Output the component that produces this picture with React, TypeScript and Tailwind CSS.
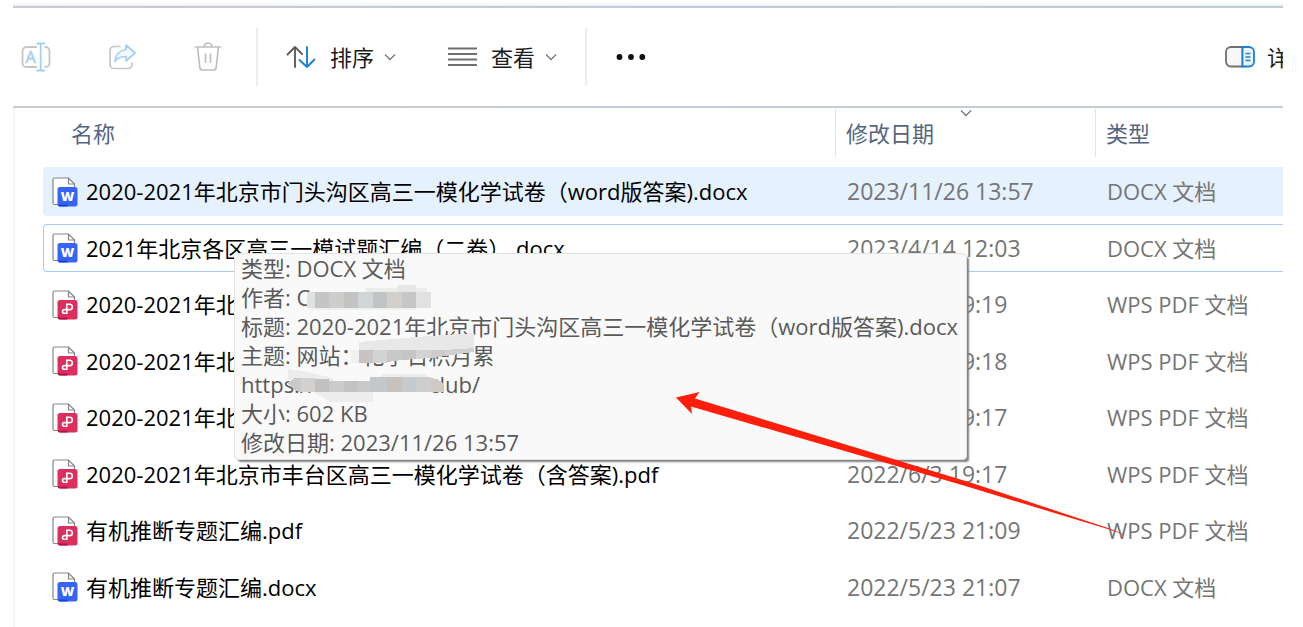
import type { ReactNode } from "react";
import clsx from "clsx";

type FileKind = "docx" | "pdf";

interface FileItem {
    name: string;
    date: string;
    kind: FileKind;
    state?: "selected" | "focused";
}

const files: FileItem[] = [
    { name: "2020-2021年北京市门头沟区高三一模化学试卷（word版答案).docx", date: "2023/11/26 13:57", kind: "docx", state: "selected" },
    { name: "2021年北京各区高三一模试题汇编（二卷）.docx", date: "2023/4/14 12:03", kind: "docx", state: "focused" },
    { name: "2020-2021年北", date: "2022/6/3 19:19", kind: "pdf" },
    { name: "2020-2021年北", date: "2022/6/3 19:18", kind: "pdf" },
    { name: "2020-2021年北", date: "2022/6/3 19:17", kind: "pdf" },
    { name: "2020-2021年北京市丰台区高三一模化学试卷（含答案).pdf", date: "2022/6/3 19:17", kind: "pdf" },
    { name: "有机推断专题汇编.pdf", date: "2022/5/23 21:09", kind: "pdf" },
    { name: "有机推断专题汇编.docx", date: "2022/5/23 21:07", kind: "docx" },
];

const typeLabels: Record<FileKind, string> = {
    docx: "DOCX 文档",
    pdf: "WPS PDF 文档",
};

function RenameIcon() {
    return (
        <svg width="30" height="30" viewBox="0 0 30 30" fill="none" strokeWidth="1.8">
            <path d="M16 5H5.5a4 4 0 0 0-4 4v12a4 4 0 0 0 4 4H16M23.5 5h1a4 4 0 0 1 4 4v12a4 4 0 0 1-4 4h-1" stroke="#c6c6c6" />
            <path d="M19.7 1.5v27M15.5 1.5h8.5M15.5 28.500h8.5" stroke="#a6cff0" />
            <text x="4.6" y="20.500" fontSize="16" fontFamily="Open Sans" fill="#a6cff0" stroke="#a6cff0" strokeWidth="0.6">A</text>
        </svg>
    );
}

function ShareIcon() {
    return (
        <svg width="28" height="28" viewBox="0 0 28 28" fill="none" strokeWidth="1.7" strokeLinejoin="round" strokeLinecap="round">
            <path d="M12 3.5H6a4 4 0 0 0-4 4v14a4 4 0 0 0 4 4h14a4 4 0 0 0 4-4v-1.5" stroke="#c6c6c6" />
            <path d="M18 2l9 8-9 8v-4.500c-5 0-8.500 1.500-11 5C7.500 12 11.500 7.500 18 6.500z" fill="#f3f9fe" stroke="#a6cff0" />
        </svg>
    );
}

function TrashIcon() {
    return (
        <svg width="28" height="30" viewBox="0 0 28 30" fill="none" stroke="#c0c0c0" strokeWidth="1.7" strokeLinecap="round">
            <path d="M1.500 5h25M10 5a4 4 0 0 1 8 0M3.500 5l2.300 20.500a3 3 0 0 0 3 2.500h10.400a3 3 0 0 0 3-2.500L24.500 5M11.500 12v8.500M16.500 12v8.500" />
        </svg>
    );
}

function SortIcon() {
    return (
        <svg width="30" height="24" viewBox="0 0 30 24" fill="none" strokeWidth="1.900" strokeLinecap="round" strokeLinejoin="round">
            <path d="M9 22V2M1.500 9.500L9 2l7 7" stroke="#5c5c5c" />
            <path d="M21 2v20M13.500 15L21 22l7.500-7.500" stroke="#1b7fd4" />
        </svg>
    );
}

function ListIcon() {
    return (
        <svg width="29" height="22" viewBox="0 0 29 22" stroke="#6f6f6f" strokeWidth="1.800">
            <path d="M0 2.500h29M0 8h29M0 13.500h29M0 19h29" />
        </svg>
    );
}

function MoreIcon() {
    return (
        <svg width="30" height="8" viewBox="0 0 30 8" fill="#111">
            <circle cx="3.500" cy="4" r="2.900" />
            <circle cx="15" cy="4" r="2.900" />
            <circle cx="26.300" cy="4" r="2.900" />
        </svg>
    );
}

function PaneIcon() {
    return (
        <svg width="30" height="24" viewBox="0 0 30 24" fill="none" strokeWidth="1.800">
            <path d="M17.500 2H6a5 5 0 0 0-5 5v9.500a5 5 0 0 0 5 5h11.500z" fill="#f7f7f7" stroke="#707070" />
            <path d="M17.500 2H24a5 5 0 0 1 5 5v9.500a5 5 0 0 1-5 5h-6.500z" fill="#eaf5fd" stroke="#1b7fd4" />
            <path d="M20.500 8.500h5M20.500 12h5M20.500 15.500h5" stroke="#1b7fd4" strokeWidth="1.500" />
        </svg>
    );
}

function Chevron({ className }: { className?: string }) {
    return (
        <svg className={className} width="12" height="8" viewBox="0 0 12 8" fill="none" stroke="#777" strokeWidth="1.300">
            <path d="M1 1.500l5 5 5-5" />
        </svg>
    );
}

function FileIcon({ kind }: { kind: FileKind }) {
    const isWord = kind === "docx";
    return (
        <svg className="shrink-0" width="26" height="30" viewBox="0 0 26 30" fill="none">
            <path d="M2.500 1h14l6 6v19a1.500 1.500 0 0 1-1.500 1.500H2.500A1.500 1.500 0 0 1 1 26V2.500A1.500 1.500 0 0 1 2.500 1z" fill="#fff" stroke="#858585" strokeWidth="1.200" />
            <path d="M16.500 1v6h6" stroke="#858585" strokeWidth="1.200" />
            <rect x="5.500" y="10" width="20" height="19.500" rx="2.500" fill={isWord ? "#3764f4" : "#dc2f5e"} />
            <path d="M5.800 27.500h9.700v2H8a2.300 2.300 0 0 1-2.200-2z" fill={isWord ? "#1747d8" : "#b3124a"} />
            {isWord ? (
                <text x="15.500" y="23.500" textAnchor="middle" fontSize="13" fontWeight="800" fontFamily="Open Sans" fill="#fff">W</text>
            ) : (
                <path d="M14.800 23.300V14.200h2.800a2.700 2.700 0 0 1 0 5.400h-5.200a1.850 1.850 0 0 0 0 3.700z" stroke="#fff" strokeWidth="1.600" />
            )}
        </svg>
    );
}

function ToolButton({ label, children }: { label: string; children: ReactNode }) {
    return (
        <button type="button" aria-label={label} className="flex w-8 items-center justify-center">
            {children}
        </button>
    );
}

function MenuButton({ icon, text }: { icon: ReactNode; text: string }) {
    return (
        <button type="button" className="flex items-center text-[22px] text-[#1c1c1c]">
            {icon}
            <span className="ml-3.5">{text}</span>
            <Chevron className="ml-2.5" />
        </button>
    );
}

function Divider() {
    return <div className="h-[58px] w-0.5 bg-[#ededed]" />;
}

function Toolbar() {
    return (
        <header className="flex h-[97px] items-center overflow-hidden pt-px pl-[7px]">
            <div className="flex items-center gap-[54px]">
                <ToolButton label="重命名"><RenameIcon /></ToolButton>
                <ToolButton label="共享"><ShareIcon /></ToolButton>
                <ToolButton label="删除"><TrashIcon /></ToolButton>
            </div>
            <div className="ml-8 flex items-center gap-7">
                <Divider />
                <div className="flex items-center gap-[52px]">
                    <MenuButton icon={<SortIcon />} text="排序" />
                    <MenuButton icon={<ListIcon />} text="查看" />
                </div>
                <Divider />
                <ToolButton label="更多"><MoreIcon /></ToolButton>
            </div>
            <button type="button" className="ml-auto flex w-[58px] shrink-0 items-center gap-3 overflow-hidden text-[22px] whitespace-nowrap text-[#1c1c1c]">
                <span className="shrink-0"><PaneIcon /></span>
                <span>详</span>
            </button>
        </header>
    );
}

function FileRow({ file }: { file: FileItem }) {
    const cell = clsx(
        "flex h-12 items-center whitespace-nowrap group-odd:h-[49px]",
        file.state === "selected" && "bg-[#e5f1fd]",
        file.state === "focused" && "border-y border-[#a9cdec]"
    );
    return (
        <tr className="group">
            <td className="p-0 pb-2">
                <div className={clsx(cell, "gap-2 rounded-l-sm text-[22px] text-black", file.state === "focused" ? "border-l pl-2" : "pl-[9px]")}>
                    <FileIcon kind={file.kind} />
                    <span>{file.name}</span>
                </div>
            </td>
            <td className="p-0 pb-2">
                <div className={clsx(cell, "pl-3 text-[23px] text-[#757575]")}>{file.date}</div>
            </td>
            <td className="p-0 pb-2">
                <div className={clsx(cell, "pl-3 text-[22px] text-[#757575]")}>{typeLabels[file.kind]}</div>
            </td>
        </tr>
    );
}

function FileTable() {
    return (
        <table className="w-full table-fixed border-separate border-spacing-0">
            <thead>
                <tr className="text-left text-[22px] text-[#54657f]">
                    <th className="p-0 pb-2.5 font-normal">
                        <div className="flex h-12 items-center pl-7">名称</div>
                    </th>
                    <th className="w-[260px] p-0 pb-2.5 font-normal">
                        <div className="relative flex h-12 items-center border-l border-[#e4e4e4] pl-2.5">
                            修改日期
                            <Chevron className="absolute top-0 left-1/2 -translate-x-1/2" />
                        </div>
                    </th>
                    <th className="w-[188px] p-0 pb-2.5 font-normal">
                        <div className="flex h-12 items-center border-l border-[#e4e4e4] pl-2.5">类型</div>
                    </th>
                </tr>
            </thead>
            <tbody>
                {files.map((file, i) => (
                    <FileRow key={i} file={file} />
                ))}
            </tbody>
        </table>
    );
}

// pixelated patches over the private parts of the tooltip
function Mosaic() {
    return (
        <svg className="absolute top-0 left-0" width="260" height="160" viewBox="0 0 260 160" shapeRendering="crispEdges">
            <g>
                <rect x="130" y="34" width="62" height="6" fill="#ececec" />
                <rect x="163" y="31" width="18" height="9" fill="#e6e6e6" />
                <rect x="72" y="38" width="8" height="16" fill="#dfe2e2" />
                <rect x="80" y="38" width="14" height="16" fill="#c6c5c5" />
                <rect x="94" y="38" width="15" height="16" fill="#cecdca" />
                <rect x="109" y="38" width="14" height="16" fill="#c3c3c3" />
                <rect x="123" y="38" width="15" height="16" fill="#d0d5d7" />
                <rect x="138" y="38" width="14" height="16" fill="#c2c3c5" />
                <rect x="152" y="38" width="15" height="16" fill="#d3d0cc" />
                <rect x="167" y="38" width="14" height="16" fill="#c5c6c8" />
                <rect x="181" y="38" width="15" height="16" fill="#e1e1e1" />
                <rect x="76" y="54" width="105" height="2" fill="#f0f0f0" />
            </g>
            <g>
                <polygon points="124,88 181,83 239,79 239,98 181,100 124,100" fill="#e8e8e8" />
                <rect x="116" y="96" width="8" height="13" fill="#f1f1f1" />
                <rect x="124" y="96" width="14" height="13" fill="#c9c3c3" />
                <rect x="138" y="96" width="14" height="13" fill="#d2d3d4" />
                <polygon points="152,96 167,96 167,106 152,108" fill="#cac8c6" />
                <polygon points="167,96 181,96 181,105 167,106" fill="#c4c5c5" />
                <polygon points="181,96 196,96 196,104 181,105" fill="#d3d3d3" />
                <polygon points="196,96 210,96 210,102 196,104" fill="#cbcbcb" />
                <polygon points="210,96 239,94 239,98 210,102" fill="#d0d0d0" />
            </g>
            <g>
                <polygon points="53,115 68,117 98,124 98,128 53,126" fill="#ececec" />
                <polygon points="78,138 138,138 138,148 96,148" fill="#ededed" />
                <polygon points="52,129 60,124 66,124 66,138 60,137" fill="#c9c9c9" />
                <rect x="66" y="124" width="14" height="14" fill="#d3d1d0" />
                <rect x="80" y="125" width="14" height="13" fill="#c3c1c0" />
                <rect x="94" y="127" width="15" height="11" fill="#cbcbcb" />
                <rect x="109" y="127" width="14" height="11" fill="#c2c3c3" />
                <rect x="123" y="127" width="12" height="11" fill="#c9c9c9" />
                <rect x="135" y="123" width="17" height="15" fill="#c4c7c9" />
                <rect x="152" y="123" width="15" height="15" fill="#c8c1bb" />
                <rect x="167" y="123" width="14" height="15" fill="#c5cacf" />
                <rect x="181" y="123" width="15" height="15" fill="#cecece" />
                <polygon points="196,124 202,125 208,129 208,138 196,138" fill="#d0c9c4" />
                <rect x="146" y="120" width="46" height="3" fill="#ececec" />
            </g>
        </svg>
    );
}

function FileTooltip() {
    return (
        <div
            role="tooltip"
            className="absolute top-[253px] left-[234px] rounded border border-[#e2e2e2] bg-[#f9f9f9] pr-2 pb-0.5 pl-1.5 text-[22px] leading-[29px] whitespace-nowrap text-[#5a5a5a] shadow-[3px_3px_2px_-1px_#808080]"
        >
            <p>类型: DOCX 文档</p>
            <p>作者: C</p>
            <p>标题: 2020-2021年北京市门头沟区高三一模化学试卷（word版答案).docx</p>
            <p>主题: 网站：化学日积月累</p>
            <p>https://www.<span className="ml-14">club/</span></p>
            <p>大小: 602 KB</p>
            <p>修改日期: 2023/11/26 13:57</p>
            <Mosaic />
        </div>
    );
}

function PointerArrow() {
    return (
        <svg className="pointer-events-none absolute top-[388px] left-[672px]" width="462" height="154" viewBox="0 0 462 154">
            <polygon points="4,9.500 27.500,4 23,10.500 300,95 436,140 456,148 434,140.600 290,97 19,18.500 20,26" fill="#fd1f0c" />
        </svg>
    );
}

export default function App() {
    return (
        <div className="relative flex min-h-screen flex-col overflow-hidden bg-white pt-1 pr-5 pl-[13px] font-['Open_Sans','Noto_Sans_CJK_SC',sans-serif]">
            <div className="h-0.5 bg-[#eef3f8]" />
            <div className="h-0.5 bg-linear-to-r from-[#d0c8d2] via-[#c3cdd9] to-[#c0ced6]" />
            <Toolbar />
            <div className="mt-px h-0.5 bg-linear-to-r from-[#d0c8d2] via-[#c3cdd9] to-[#c0ced6]" />
            <main className="grow border-l-2 border-[#f4f4f4] pt-px pl-7">
                <FileTable />
            </main>
            <FileTooltip />
            <PointerArrow />
        </div>
    );
}
